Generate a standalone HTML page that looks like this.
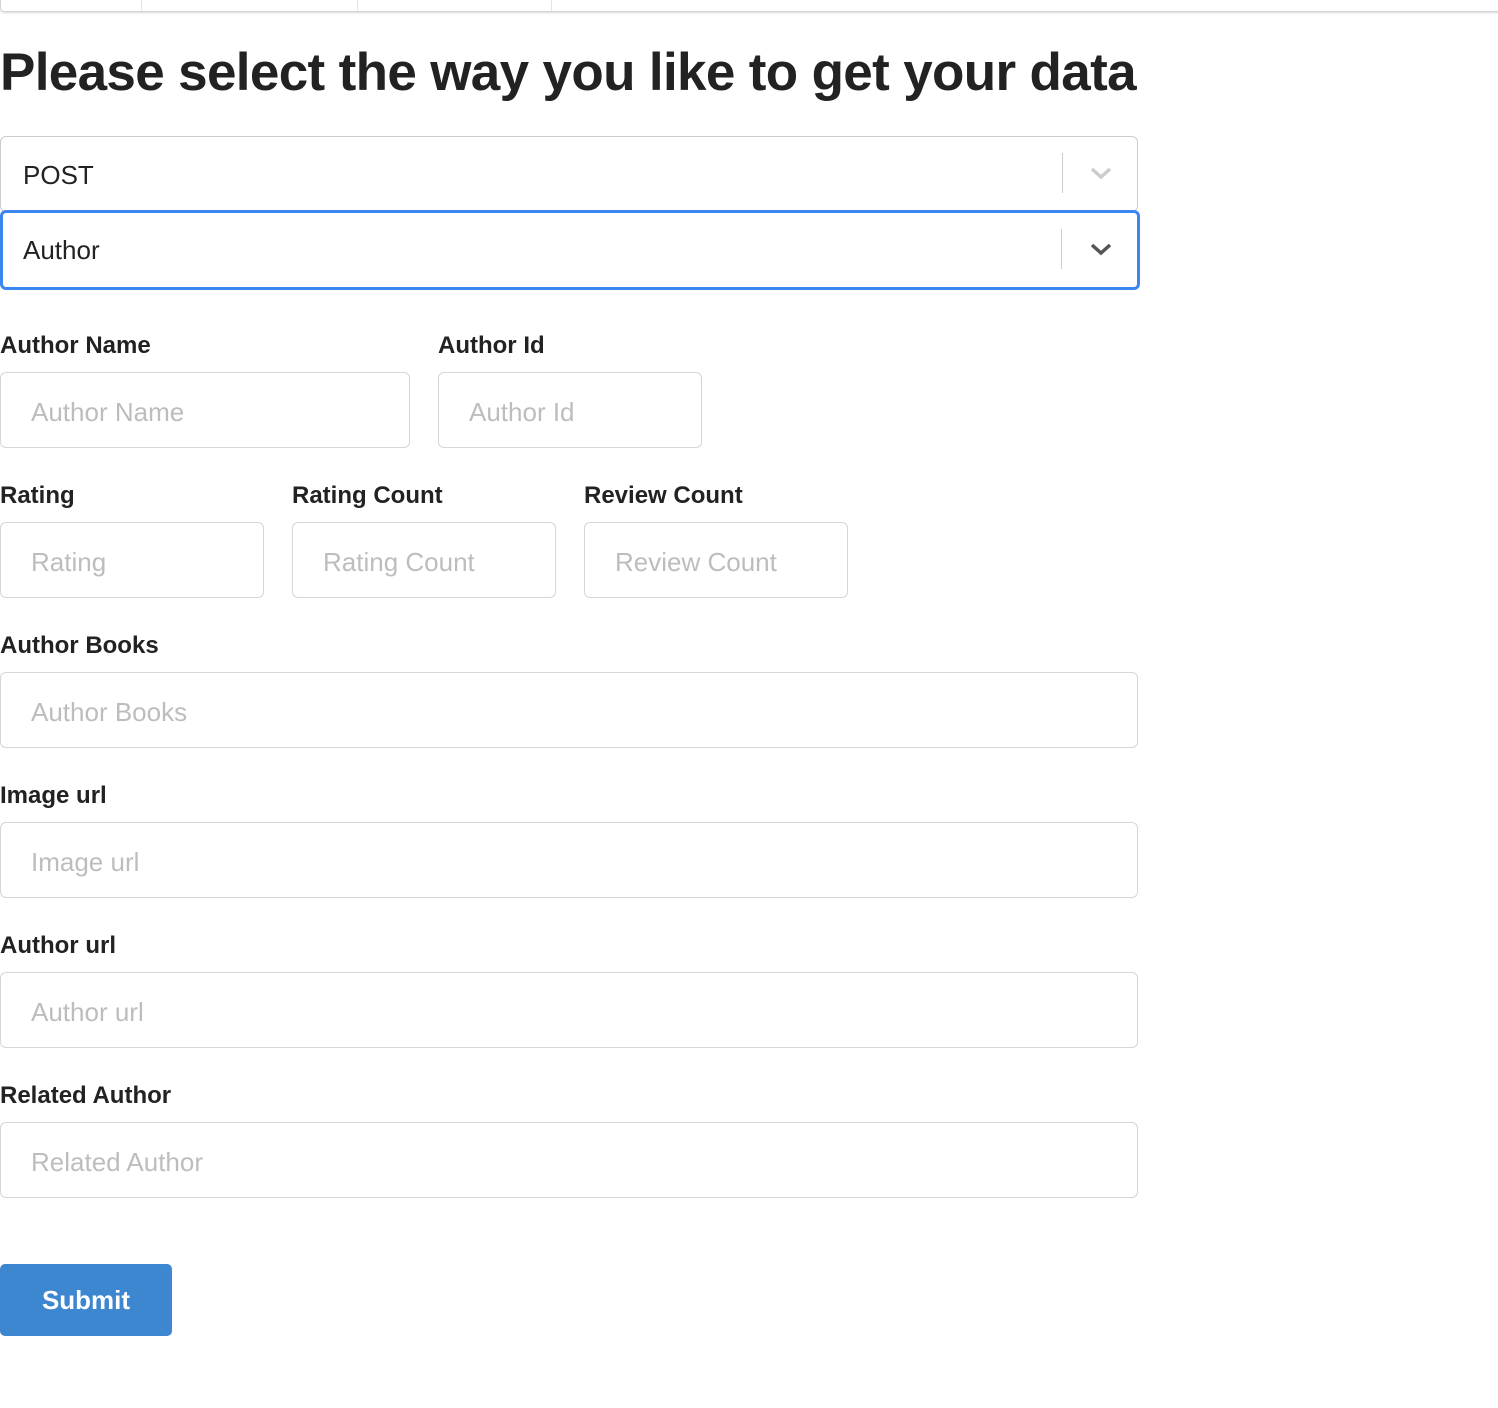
<!DOCTYPE html>
<html><head><style>
*{box-sizing:border-box;margin:0;padding:0}
body{width:1498px;height:1408px;background:#fff;font-family:"Liberation Sans",sans-serif;color:#222;position:relative;overflow:hidden}
.nav{position:absolute;left:0;top:-10px;width:1510px;height:22px;border:1px solid #d4d4d5;border-radius:4px;box-shadow:0 1px 2px rgba(0,0,0,.15);background:#fff}
.nav i{position:absolute;top:0;bottom:0;width:1px;background:#e4e4e4}
h1{position:absolute;left:0;top:42px;font-size:53px;font-weight:bold;letter-spacing:-0.65px;color:#222;white-space:nowrap}
.sel{position:absolute;left:0;width:1138px;height:76px;border:1px solid #ccc;border-radius:6px;font-size:26px;padding-left:22px;line-height:76px;color:#222}
.sel.f{border:3px solid #3b86f0;line-height:74px;padding-left:20px;width:1140px;height:80px}
.sel .d{position:absolute;right:74px;top:16px;width:1px;height:40px;background:#ccc}
.sel.f .d{right:75px;top:16px}
.sel svg{position:absolute;right:24px;top:30px}
.sel.f svg{right:24px;top:30px}
label{position:absolute;font-size:24px;font-weight:bold;color:#222;margin-top:2px}
.in{position:absolute;height:76px;border:1px solid #d6d6d6;border-radius:6px;font-size:26px;color:#bdbdbd;padding-left:30px;line-height:78px}
.btn{position:absolute;left:0;top:1264px;width:172px;height:72px;background:#3d86d0;border-radius:5px;color:#fff;font-size:26px;font-weight:bold;text-align:center;line-height:72px}
</style></head><body>
<div class="nav"><i style="left:140px"></i><i style="left:356px"></i><i style="left:550px"></i></div>
<h1>Please select the way you like to get your data</h1>
<div class="sel" style="top:136px">POST<div class="d"></div><svg width="24" height="16" viewBox="0 0 24 16"><path d="M3 2l9 8 9-8" fill="none" stroke="#ccc" stroke-width="3.5"/></svg></div>
<div class="sel f" style="top:210px">Author<div class="d"></div><svg width="24" height="16" viewBox="0 0 24 16"><path d="M3 2l9 8 9-8" fill="none" stroke="#555" stroke-width="3.5"/></svg></div>
<label style="left:0;top:330px">Author Name</label>
<label style="left:438px;top:330px">Author Id</label>
<div class="in" style="left:0;top:372px;width:410px">Author Name</div>
<div class="in" style="left:438px;top:372px;width:264px">Author Id</div>
<label style="left:0;top:480px">Rating</label>
<label style="left:292px;top:480px">Rating Count</label>
<label style="left:584px;top:480px">Review Count</label>
<div class="in" style="left:0;top:522px;width:264px">Rating</div>
<div class="in" style="left:292px;top:522px;width:264px">Rating Count</div>
<div class="in" style="left:584px;top:522px;width:264px">Review Count</div>
<label style="left:0;top:630px">Author Books</label>
<div class="in" style="left:0;top:672px;width:1138px">Author Books</div>
<label style="left:0;top:780px">Image url</label>
<div class="in" style="left:0;top:822px;width:1138px">Image url</div>
<label style="left:0;top:930px">Author url</label>
<div class="in" style="left:0;top:972px;width:1138px">Author url</div>
<label style="left:0;top:1080px">Related Author</label>
<div class="in" style="left:0;top:1122px;width:1138px">Related Author</div>
<div class="btn">Submit</div>
</body></html>
